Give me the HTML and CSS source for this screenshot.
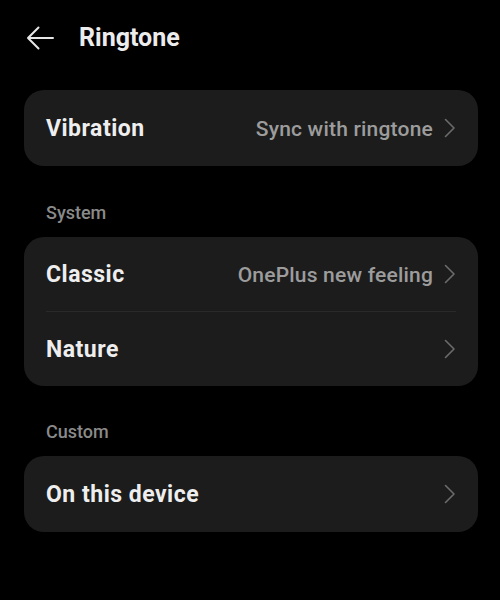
FILE: index.html
```html
<!DOCTYPE html>
<html>
<head>
<meta charset="utf-8">
<link rel="stylesheet" href="styles.css">
</head>
<body>
<div class="screen">
  <header class="header">
    <svg class="back" width="28" height="24" viewBox="0 0 28 24"><path d="M27 12H2M12.5 1.5L2 12l10.5 10.5" fill="none" stroke="#e6e6e6" stroke-width="2" stroke-linecap="round" stroke-linejoin="round"/></svg>
    <h1 class="title">Ringtone</h1>
  </header>
  <main class="content">
    <div class="card">
      <div class="row">
        <span class="label">Vibration</span>
        <span class="value">Sync with ringtone</span>
        <svg class="chev" width="12" height="20" viewBox="0 0 12 20"><path d="M1.5 1.5L10 10l-8.5 8.5" fill="none" stroke="#6b6b6b" stroke-width="1.6" stroke-linecap="round" stroke-linejoin="round"/></svg>
      </div>
    </div>
    <div class="section">System</div>
    <div class="card">
      <div class="row row-top">
        <span class="label">Classic</span>
        <span class="value">OnePlus new feeling</span>
        <svg class="chev" width="12" height="20" viewBox="0 0 12 20"><path d="M1.5 1.5L10 10l-8.5 8.5" fill="none" stroke="#6b6b6b" stroke-width="1.6" stroke-linecap="round" stroke-linejoin="round"/></svg>
      </div>
      <div class="divider"></div>
      <div class="row row-bottom">
        <span class="label">Nature</span>
        <span class="value"></span>
        <svg class="chev" width="12" height="20" viewBox="0 0 12 20"><path d="M1.5 1.5L10 10l-8.5 8.5" fill="none" stroke="#6b6b6b" stroke-width="1.6" stroke-linecap="round" stroke-linejoin="round"/></svg>
      </div>
    </div>
    <div class="section section-custom">Custom</div>
    <div class="card">
      <div class="row">
        <span class="label">On this device</span>
        <span class="value"></span>
        <svg class="chev" width="12" height="20" viewBox="0 0 12 20"><path d="M1.5 1.5L10 10l-8.5 8.5" fill="none" stroke="#6b6b6b" stroke-width="1.6" stroke-linecap="round" stroke-linejoin="round"/></svg>
      </div>
    </div>
  </main>
</div>
</body>
</html>
```
FILE: styles.css
```css
html, body {
  margin: 0;
  padding: 0;
  background: #000;
}
body {
  font-family: Roboto, "Noto Sans", "Liberation Sans", sans-serif;
  color: #eeeeee;
  width: 500px;
  height: 600px;
  overflow: hidden;
}
.screen {
  display: flex;
  flex-direction: column;
}
.header {
  height: 76px;
  display: flex;
  align-items: center;
  padding-left: 26px;
  gap: 25px;
}
.back {
  display: block;
  flex: none;
}
.title {
  margin: 0;
  font-size: 25px;
  line-height: 30px;
  font-weight: 700;
  color: #ececec;
}
.content {
  padding: 14px 22px 0 24px;
  display: flex;
  flex-direction: column;
}
.card {
  background: #1c1c1c;
  border-radius: 20px;
  display: flex;
  flex-direction: column;
}
.row {
  height: 76px;
  display: flex;
  align-items: center;
  padding: 0 22px 0 22px;
}
.row-top,
.row-bottom {
  height: 74px;
}
.label {
  font-size: 23px;
  line-height: 28px;
  font-weight: 700;
  letter-spacing: 0.5px;
  color: #eeeeee;
  padding-top: 2px;
}
.value {
  flex: 1;
  text-align: right;
  font-size: 21px;
  line-height: 26px;
  font-weight: 500;
  letter-spacing: 0.2px;
  color: #9c9c9c;
  margin-right: 11px;
  padding-top: 2px;
}
.chev {
  display: block;
  flex: none;
}
.divider {
  height: 1px;
  background: #2a2a2a;
  margin: 0 22px 0 22px;
}
.section {
  font-size: 18px;
  font-weight: 500;
  color: #8a8a8a;
  line-height: 20px;
  padding: 37px 0 14px 22px;
}
.section-custom {
  padding-top: 36px;
}
```
